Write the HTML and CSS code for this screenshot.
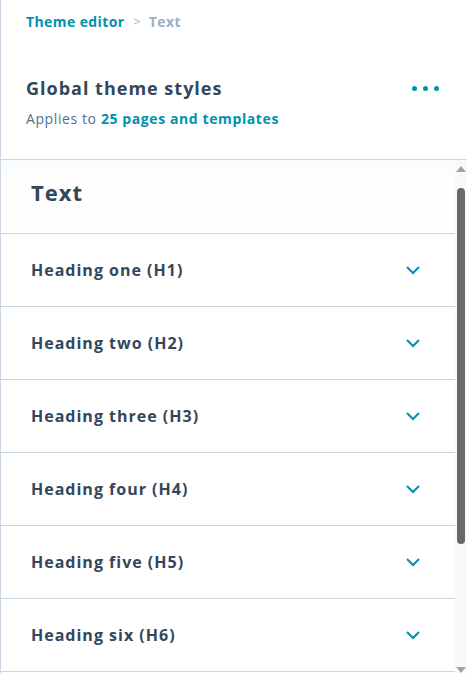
FILE: index.html
```html
<!DOCTYPE html>
<html lang="en">
<head>
<meta charset="utf-8">
<title>Theme editor - Text</title>
<link rel="stylesheet" href="styles.css">
</head>
<body>
<div class="panel">
  <header class="header">
    <nav class="crumbs">
      <a class="crumb-link">Theme editor</a>
      <span class="crumb-sep">&gt;</span>
      <span class="crumb-current">Text</span>
    </nav>
    <div class="title-row">
      <h1 class="title">Global theme styles</h1>
      <button class="more" aria-label="More">
        <span class="dot"></span><span class="dot"></span><span class="dot"></span>
      </button>
    </div>
    <p class="applies">Applies to <a class="applies-link">25 pages and templates</a></p>
  </header>
  <div class="scroll">
    <div class="content">
      <div class="section-title"><h2>Text</h2></div>
      <div class="row"><span class="row-label">Heading one (H1)</span><svg class="chev" viewBox="0 0 16 10" width="16" height="10"><path d="M2 2 L8 8 L14 2" /></svg></div>
      <div class="row"><span class="row-label">Heading two (H2)</span><svg class="chev" viewBox="0 0 16 10" width="16" height="10"><path d="M2 2 L8 8 L14 2" /></svg></div>
      <div class="row"><span class="row-label">Heading three (H3)</span><svg class="chev" viewBox="0 0 16 10" width="16" height="10"><path d="M2 2 L8 8 L14 2" /></svg></div>
      <div class="row"><span class="row-label">Heading four (H4)</span><svg class="chev" viewBox="0 0 16 10" width="16" height="10"><path d="M2 2 L8 8 L14 2" /></svg></div>
      <div class="row"><span class="row-label">Heading five (H5)</span><svg class="chev" viewBox="0 0 16 10" width="16" height="10"><path d="M2 2 L8 8 L14 2" /></svg></div>
      <div class="row"><span class="row-label">Heading six (H6)</span><svg class="chev" viewBox="0 0 16 10" width="16" height="10"><path d="M2 2 L8 8 L14 2" /></svg></div>
    </div>
    <div class="scrollbar">
      <span class="arrow-up"></span>
      <span class="thumb"></span>
      <span class="arrow-down"></span>
    </div>
  </div>
</div>
</body>
</html>
```
FILE: styles.css
```css
* { box-sizing: border-box; }
html, body {
  margin: 0;
  padding: 0;
  height: 673px;
  overflow: hidden;
  background: #fff;
}
body {
  font-family: "Open Sans", "Liberation Sans", sans-serif;
  color: #33475b;
}
.panel {
  height: 673px;
  display: flex;
  flex-direction: column;
  border-left: 1px solid #cbd6e2;
}
.header {
  height: 160px;
  flex: none;
  padding: 12px 0 0 25px;
  border-bottom: 1px solid #cbd6e2;
  background: #fff;
}
.crumbs {
  display: flex;
  align-items: center;
  font-size: 14px;
  font-weight: 700;
  line-height: 20px;
  letter-spacing: 0.4px;
}
.crumb-link { color: #0091ae; }
.crumb-sep {
  color: #99afc4;
  font-weight: 400;
  font-size: 12px;
  margin: 0 8px 0 9px;
}
.crumb-current { color: #99afc4; }
.title-row {
  display: flex;
  align-items: center;
  justify-content: space-between;
  margin-top: 44px;
  padding-right: 28px;
}
.title {
  margin: 0;
  font-size: 18px;
  font-weight: 700;
  line-height: 24px;
  letter-spacing: 1px;
  color: #33475b;
}
.more {
  display: flex;
  gap: 6px;
  border: 0;
  background: none;
  padding: 0;
}
.dot {
  width: 5px;
  height: 5px;
  border-radius: 50%;
  background: #0091ae;
}
.applies {
  margin: 9px 0 0;
  font-size: 14px;
  line-height: 20px;
  letter-spacing: 0.6px;
  color: #516f90;
}
.applies-link { color: #0091ae; font-weight: 700; }
.scroll {
  flex: 1;
  display: flex;
  min-height: 0;
  overflow: hidden;
  background: #fdfdfe;
}
.content {
  flex: 1;
  min-width: 0;
}
.section-title {
  height: 74px;
  display: flex;
  align-items: center;
  padding: 0 30px 10px;
  border-bottom: 1px solid #cbd6e2;
  background: linear-gradient(#fbfcfd 0, #fbfcfd 12px, #fefefe 14px);
}
.section-title h2 {
  margin: 0;
  font-size: 22px;
  font-weight: 700;
  letter-spacing: 1px;
  color: #33475b;
}
.row {
  height: 73px;
  display: flex;
  align-items: center;
  justify-content: space-between;
  padding: 0 34px 0 30px;
  border-bottom: 1px solid #cbd6e2;
  background: #fff;
}
.row-label {
  font-size: 16px;
  font-weight: 700;
  letter-spacing: 1px;
  color: #33475b;
}
.chev {
  fill: none;
  stroke: #0091ae;
  stroke-width: 2;
}
.scrollbar {
  width: 12px;
  flex: none;
  background: #f9f9f9;
  display: flex;
  flex-direction: column;
  align-items: center;
}
.arrow-up {
  margin-top: 6px;
  width: 0;
  height: 0;
  border-left: 5px solid transparent;
  border-right: 5px solid transparent;
  border-bottom: 6px solid #a3a3a3;
}
.thumb {
  margin-top: 16px;
  width: 8px;
  height: 356px;
  border-radius: 4px;
  background: #686868;
}
.arrow-down {
  margin-top: auto;
  width: 0;
  height: 0;
  border-left: 5px solid transparent;
  border-right: 5px solid transparent;
  border-top: 6px solid #a3a3a3;
}
```
